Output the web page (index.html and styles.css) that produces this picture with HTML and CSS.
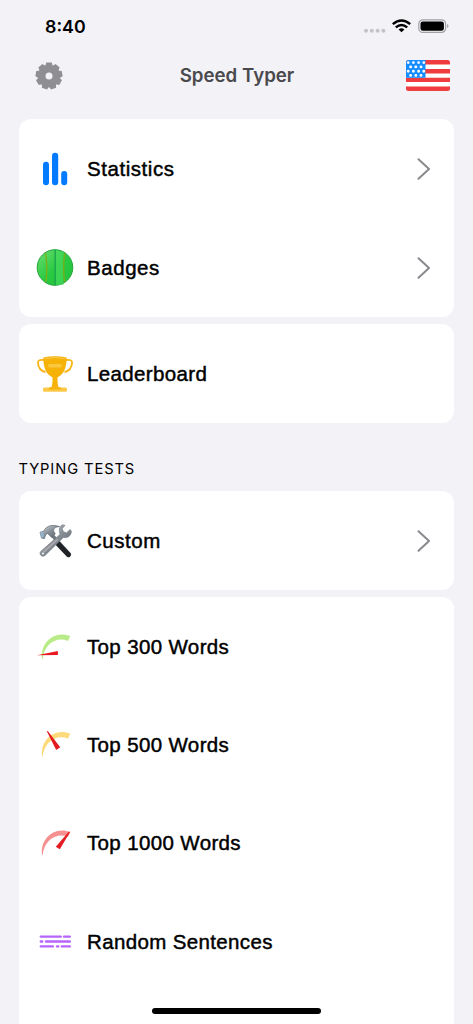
FILE: index.html
```html
<!DOCTYPE html>
<html lang="en">
<head>
<meta charset="utf-8">
<title>Speed Typer</title>
<link rel="stylesheet" href="styles.css">
</head>
<body>
<div class="screen">
  <div class="status">
    <span class="time">8:40</span>
    <svg class="status-icons" width="86" height="18" viewBox="0 0 86 18">
      <g fill="#c3c3c8"><circle cx="3" cy="12.7" r="2"/><circle cx="8.8" cy="12.7" r="2"/><circle cx="14.6" cy="12.7" r="2"/><circle cx="20.4" cy="12.7" r="2"/></g>
      <g fill="none" stroke="#000" stroke-width="2.5"><path d="M29.8 6.1Q38.5-1.1 47.2 6.1"/><path d="M32.8 9.4Q38.5 4.7 44.2 9.4"/></g>
      <path d="M35.6 11.4Q38.5 9.2 41.4 11.4L38.5 14.3Z"/>
      <rect x="55.8" y="1.8" width="26.8" height="12.6" rx="4" fill="none" stroke="#a2a2a6" stroke-width="1.2"/>
      <rect x="57.5" y="3.4" width="23.4" height="9.4" rx="2.4"/>
      <path d="M84.2 6Q86.8 8.1 84.2 10.2Z" fill="#98989c"/>
    </svg>
  </div>
  <div class="nav">
    <svg class="gear" width="28" height="28" viewBox="-14 -14 28 28">
      <g fill="#8e8e93"><circle r="11.3"/>
        <path id="tooth" d="M-3.6-10.4-2.7-13.4H2.7L3.6-10.4Z"/><use href="#tooth" transform="rotate(40)"/><use href="#tooth" transform="rotate(80)"/><use href="#tooth" transform="rotate(120)"/><use href="#tooth" transform="rotate(160)"/><use href="#tooth" transform="rotate(200)"/><use href="#tooth" transform="rotate(240)"/><use href="#tooth" transform="rotate(280)"/><use href="#tooth" transform="rotate(320)"/>
      </g><circle r="3.5" fill="#f2f2f7"/>
    </svg>
    <h1>Speed Typer</h1>
    <svg class="flag" width="44" height="31" viewBox="0 0 44 31">
      <defs><clipPath id="fc"><rect width="44" height="31" rx="2.5"/></clipPath></defs>
      <g clip-path="url(#fc)"><rect width="44" height="31" fill="#fff"/>
      <path d="M0 0H44V4.6H0ZM0 9H44V13.4H0ZM0 17.8H44V22.1H0ZM0 26.6H44V31H0Z" fill="#ef3d3f"/>
      <rect width="19.5" height="17.8" fill="#168dff"/>
      <g fill="none" stroke="#fff" stroke-width="2.9" stroke-linecap="round"><path stroke-dasharray="0 5.2" d="M2.2 2.6H18.5M2.2 11.2H18.5M4.6 6.9H16M4.6 15.4H16"/></g></g>
    </svg>
  </div>

  <div class="card">
    <div class="row"><svg class="icon" viewBox="0 0 44 44"><g fill="#047bff"><rect x="10" y="14.7" width="6" height="23.5" rx="3"/><rect x="19" y="5.8" width="6.2" height="32.4" rx="3"/><rect x="28.2" y="24" width="6" height="14.2" rx="3"/></g></svg><span class="wide">Statistics</span><svg class="chevron" viewBox="0 0 14 22"><path d="M1.5 1.2 12 11 1.5 20.8"/></svg></div>
    <div class="row"><svg class="icon" viewBox="0 0 44 44">
      <defs><linearGradient id="gg" x1="0" y1="0" x2="1" y2="1"><stop offset="0" stop-color="#6ede73"/><stop offset=".5" stop-color="#2bca43"/><stop offset="1" stop-color="#20c03a"/></linearGradient></defs>
      <circle cx="22" cy="21.5" r="17.8" fill="url(#gg)" stroke="#22a438" stroke-width="1"/>
      <path d="M22 4V39H30.6Q28.8 21 30.6 6Z" fill="#4bdc60" opacity=".6"/>
      <path d="M22.2 4V39" stroke="#16a24b" stroke-width="1.3"/><path d="M12.5 7Q14.8 21 12.8 36" fill="none" stroke="#7cae18" stroke-width="1.3"/><path d="M31.8 7Q29.6 21 31.6 36" fill="none" stroke="#7cae18" stroke-width="1.3"/></svg><span class="wide">Badges</span><svg class="chevron" viewBox="0 0 14 22"><path d="M1.5 1.2 12 11 1.5 20.8"/></svg></div>
  </div>

  <div class="card">
    <div class="row"><svg class="icon" viewBox="0 0 44 44">
      <path d="M11 8.2Q4.8 7.2 4.9 10.4C5.2 15.5 7.5 19 12.5 20M33 8.2Q39.2 7.2 39.1 10.4C38.8 15.5 36.5 19 31.5 20" fill="none" stroke="#f8b516" stroke-width="1.8"/>
      <path d="M10.3 5.5Q22 3.2 33.7 5.5C33.8 14.5 31.2 22.5 24.5 25.2Q24.3 33 26 35.8H18Q19.7 33 19.5 25.2C12.8 22.5 10.2 14.5 10.3 5.5Z" fill="#f7b208"/>
      <path d="M12 6.5Q22 4.7 32 6.5" fill="none" stroke="#f9c94d" stroke-width="1"/><rect x="15" y="12" width="14" height="3.4" rx="1.7" fill="#fac83f"/><rect x="10" y="35.6" width="24" height="4.2" rx="1.4" fill="#fcc94b"/><path d="M17 35.3H27L29 37.5H15Z" fill="#f7b208"/></svg><span>Leaderboard</span></div>
  </div>

  <h2>TYPING TESTS</h2>

  <div class="card custom">
    <div class="row"><svg class="icon" viewBox="0 0 44 44">
      <defs><linearGradient id="metal" x1="0" y1="0" x2="1" y2="1"><stop offset="0" stop-color="#dfe3e7"/><stop offset=".5" stop-color="#858c94"/><stop offset="1" stop-color="#596069"/></linearGradient></defs>
      <path d="M18 15 37 36" stroke="#6d7780" stroke-width="3.4"/>
      <path d="M24.8 24.5 35.5 35.7" stroke="#202225" stroke-width="5" stroke-linecap="round"/>
      <path d="M29.2 5.8C26 8 25.8 12 27.2 15.3L8 32.2C5.3 35 9 38.8 12 36.4L30.3 18.4C34.5 19.4 38.4 16.6 38.3 12.2L37.2 10.4 33.3 14 30.2 12.6 29.2 9.5 32 6.4Z" fill="url(#metal)" stroke="#747b83" stroke-width=".7"/>
      <path d="M10.5 33.2 24.5 20.5" stroke="#b5aeb5" stroke-width="1.3"/><circle cx="10" cy="34.4" r="1" fill="#fff"/>
      <path d="M7 13.2 10.5 12.4C13 7 18.5 4.8 26.5 7.6 22.5 7.9 20.2 9.3 20.8 12.4L22.3 14.8 18.5 18.2 14.6 14.4 12.5 16 11.4 19.6 8.5 19Z" fill="url(#metal)" stroke="#606870" stroke-width=".7"/><path d="M7 13.3 8.7 19.2 11.3 17.5 10.2 13Z" fill="#91b3ce"/></svg><span class="wide">Custom</span><svg class="chevron" viewBox="0 0 14 22"><path d="M1.5 1.2 12 11 1.5 20.8"/></svg></div>
  </div>

  <div class="card last">
    <div class="row"><svg class="icon" viewBox="0 0 44 44"><path fill="#b9ec88" d="M9.2 34C6.5 19 20.5 4.5 37.3 11L35 16C23.5 11 11 19.5 9.7 34Z"/><path fill="#e8191f" d="M4 30.2 24.9 25.9V30Z"/></svg><span>Top 300 Words</span></div>
    <div class="row"><svg class="icon" viewBox="0 0 44 44"><path fill="#fddb7d" d="M9.2 33.6C6.5 18.6 20.5 4.1 37.3 10.6L35 15.6C23.5 10.6 11 19.1 9.7 33.6Z"/><path fill="#e31b20" d="M13.8 8.3 14.8 8 27.2 24.2 23.2 26.9Z"/></svg><span>Top 500 Words</span></div>
    <div class="row"><svg class="icon" viewBox="0 0 44 44"><path fill="#f49190" d="M9.2 34C6.5 19 20.5 4.5 37.3 11L35 16C23.5 11 11 19.5 9.7 34Z"/><path fill="#e31b20" d="M36 10.4 37 11 26.8 28.2 22.8 25.8Z"/></svg><span>Top 1000 Words</span></div>
    <div class="row"><svg class="icon" viewBox="0 0 44 44"><path d="M7.8 16.6H27.8M31 16.6H36.8M7.8 21.5H9.3M13 21.5H36.8M7.8 26.4H19.8M24 26.4H25.3M28.8 26.4H36.8" stroke="#b765fc" stroke-width="2.4" stroke-linecap="round"/></svg><span>Random Sentences</span></div>
  </div>
  <div class="home-indicator"></div>
</div>
</body>
</html>
```
FILE: styles.css
```css
* { box-sizing: border-box; }
body { margin: 0; background: #f2f2f7; color: #000; font-family: "Liberation Sans", sans-serif; }
.screen { position: relative; height: 1024px; overflow: hidden; padding: 0 19px; display: flex; flex-direction: column; }
.status { height: 52px; flex: none; display: flex; justify-content: space-between; align-items: flex-start; padding: 18px 5px 0 26px; }
.time { font: 600 17.8px/18px Inter, sans-serif; }
.nav { height: 47px; flex: none; display: flex; align-items: center; justify-content: space-between; padding: 0 4px 0 16px; }
.nav h1 { margin: 0 0 0 5px; font: 600 18.7px/24px Inter, sans-serif; color: #4a4a4d; }
.card { flex: none; background: #fff; border-radius: 12px; margin-bottom: 6.6px; }
.custom { margin-bottom: 7.4px; }
.nav + .card { margin-top: 20px; }
.row { height: 99px; display: flex; align-items: center; padding: 1px 23px 0 14px; font-size: 20.5px; -webkit-text-stroke: .45px #000; letter-spacing: .36px; }
.wide { letter-spacing: .55px; }
.icon { width: 44px; height: 44px; flex: none; margin-right: 10px; }
.chevron { width: 14px; height: 22px; margin-left: auto; fill: none; stroke: #8a8a8e; stroke-width: 2; stroke-linecap: round; stroke-linejoin: round; }
h2 { margin: 29.4px 0 12px -.5px; font: 400 14.7px/20px Inter, sans-serif; letter-spacing: .9px; height: 20px; }
.last { height: 440px; margin-bottom: 0; }
.last .row { height: 98.4px; }
.home-indicator { position: absolute; left: 152px; top: 1008px; width: 169px; height: 6px; border-radius: 3px; background: #000; }
```
